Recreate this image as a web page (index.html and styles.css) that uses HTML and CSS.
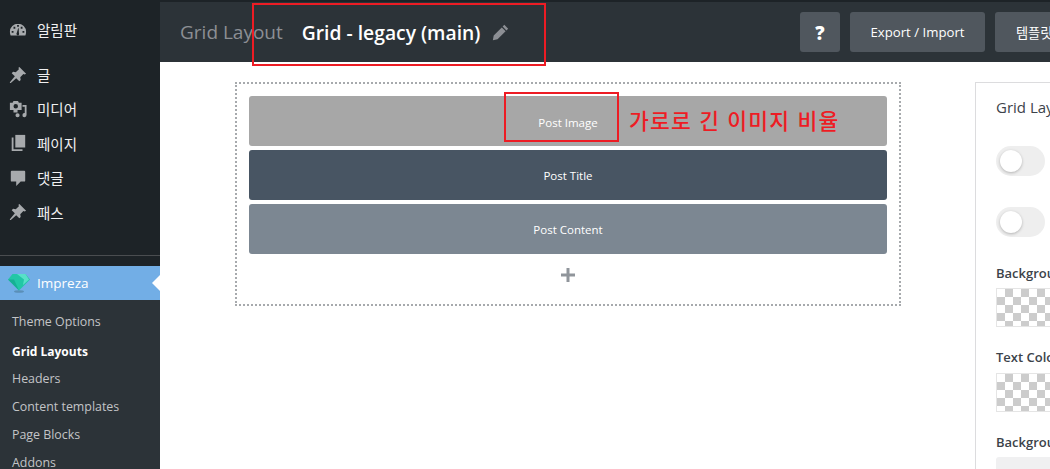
FILE: index.html
```html
<!DOCTYPE html>
<html lang="ko">
<head>
  <meta charset="UTF-8">
  <title>Grid Layout</title>
  <link rel="stylesheet" href="styles.css">
</head>
<body>
  <div class="admin">
    <nav class="sidebar">
      <ul class="menu">
        <li class="menu-item menu-first">
          <svg class="menu-icon" viewBox="0 0 20 20">
            <path fill-rule="evenodd" d="M10 3a9 9 0 0 0-9 9c0 1.600.3 3 .8 4h16.400c.5-1 .8-2.400.8-4a9 9 0 0 0-9-9zM3 11h2v2H3zm2-4.500h2v2H5zM9 4.500h2v2H9zm4 2h2v2h-2zm2 4.500h2v2h-2zM11.200 14a1.500 1.500 0 1 1-2.600-.6L10.200 8l.6 0 .2 5z"/>
          </svg>
          <span>알림판</span>
        </li>
        <li class="menu-item menu-gap">
          <svg class="menu-icon" viewBox="0 0 20 20"><path d="M11.500 1l7.500 7.500-1.600 1-1.400-.5-3.500 3.500.5 3-1.500 1.500-3.500-3.500L2 19l-1 0 0-1 5.500-6.500L3 8l1.500-1.500 3 .5L11 3.500 10.500 2z"/></svg>
          <span>글</span>
        </li>
        <li class="menu-item">
          <svg class="menu-icon" viewBox="0 0 20 20">
            <path fill-rule="evenodd" d="M1 3h3l1-2h5l1 2h3v8H9.500v3H5v-3H1zm6.500 1.500a2.500 2.500 0 1 0 0 5 2.500 2.500 0 0 0 0-5z"/>
            <path d="M15 5.500h4.500v11.300a2.300 2.300 0 1 1-2-2.300V7.500H15zM9.500 14.700a2.300 2.300 0 1 1 0 4.600 2.300 2.300 0 0 1 0-4.600z"/>
          </svg>
          <span>미디어</span>
        </li>
        <li class="menu-item">
          <svg class="menu-icon" viewBox="0 0 20 20"><path d="M7 1h11v14H7z"/><path d="M5 4v13h10v2H3V4z"/></svg>
          <span>페이지</span>
        </li>
        <li class="menu-item">
          <svg class="menu-icon" viewBox="0 0 20 20"><path d="M3 2h14a1 1 0 0 1 1 1v10a1 1 0 0 1-1 1h-4l-5 5v-5H3a1 1 0 0 1-1-1V3a1 1 0 0 1 1-1z"/></svg>
          <span>댓글</span>
        </li>
        <li class="menu-item">
          <svg class="menu-icon" viewBox="0 0 20 20"><path d="M11.500 1l7.500 7.500-1.600 1-1.400-.5-3.500 3.500.5 3-1.500 1.500-3.500-3.500L2 19l-1 0 0-1 5.500-6.500L3 8l1.500-1.500 3 .5L11 3.500 10.500 2z"/></svg>
          <span>패스</span>
        </li>
      </ul>
      <div class="menu-separator"></div>
      <div class="menu-current">
        <svg class="gem" viewBox="0 0 22 20">
          <ellipse cx="11" cy="18.500" rx="5" ry="1.300" fill="#5a8fb8"/>
          <path d="M4.500 1h13L22 6.500 11 17.500 0 6.500z" fill="#22c7a6"/>
          <path d="M9 1h8.500L21 6.500l-6 5.500 1-5.500z" fill="#58e0c8"/>
          <path d="M0 6.500h6L11 17.500z" fill="#17b094"/>
        </svg>
        <span>Impreza</span>
      </div>
      <ul class="submenu">
        <li>Theme Options</li>
        <li class="submenu-active">Grid Layouts</li>
        <li>Headers</li>
        <li>Content templates</li>
        <li>Page Blocks</li>
        <li>Addons</li>
      </ul>
    </nav>

    <div class="main">
      <header class="topbar">
        <span class="topbar-label">Grid Layout</span>
        <span class="topbar-title">Grid - legacy (main)</span>
        <svg class="pencil" viewBox="0 0 20 20"><path d="M14.500 1l4.500 4.500-2 2L12.500 3zM11.500 4l4.500 4.500-9.500 9.500L1 19l1-5.500z"/></svg>
        <div class="topbar-actions">
          <button class="btn btn-help">?</button>
          <button class="btn btn-export">Export / Import</button>
          <button class="btn btn-template">템플릿 선택</button>
        </div>
      </header>

      <div class="content">
        <section class="canvas">
          <div class="block block-image">Post Image</div>
          <div class="block block-title">Post Title</div>
          <div class="block block-content">Post Content</div>
          <div class="add-block">
            <svg class="plus" viewBox="0 0 14 14"><path d="M5.500 0h3v5.500H14v3H8.500V14h-3V8.500H0v-3h5.500z"/></svg>
          </div>
        </section>

        <aside class="panel">
          <div class="panel-title">Grid Layout Settings</div>
          <div class="toggle"><span class="knob"></span></div>
          <div class="toggle toggle-second"><span class="knob"></span></div>
          <label class="field-label label-bg">Background Color</label>
          <div class="swatch"></div>
          <label class="field-label label-text">Text Color</label>
          <div class="swatch"></div>
          <label class="field-label label-bg2">Background Image</label>
          <div class="input-box"></div>
        </aside>
      </div>
    </div>
  </div>

  <!-- red notes drawn over the screenshot -->
  <div class="note note-title"></div>
  <div class="note note-image"></div>
  <div class="note-text">가로로 긴 이미지 비율</div>
</body>
</html>
```

FILE: styles.css
```css
html, body {
  margin: 0;
  height: 469px;
  overflow: hidden;
}

body {
  position: relative;
  font-family: "Open Sans", "Noto Sans CJK KR", sans-serif;
  background-color: #fff;
  color: #3c434a;
}

ul {
  list-style: none;
  margin: 0;
  padding: 0;
}

.admin {
  display: flex;
  width: 1050px;
  height: 469px;
  overflow: hidden;
}

.sidebar {
  flex: 0 0 160px;
  background-color: #1d2327;
  color: #f0f0f1;
  font-size: 14px;
}

.menu {
  padding-top: 12.500px;
}

.menu-item {
  display: flex;
  align-items: center;
  height: 34.400px;
  padding-left: 9px;
  font-family: "Noto Sans CJK KR", sans-serif;
  font-size: 14.500px;
}

.menu-gap {
  margin-top: 10.500px;
}

.menu-icon {
  width: 18px;
  height: 18px;
  margin-right: 10px;
  fill: #a7aaad;
  flex: none;
}

.menu-separator {
  height: 1px;
  margin-top: 25.500px;
  background-color: #4a4d50;
}

.menu-current {
  display: flex;
  align-items: center;
  height: 34px;
  margin-top: 10px;
  padding-left: 8px;
  background-color: #72aee6;
  color: #fff;
  font-size: 13.500px;
  position: relative;
}

.menu-current::after {
  content: "";
  position: absolute;
  right: 0;
  top: 9px;
  border: 8px solid transparent;
  border-right-color: #fff;
  border-left-width: 0;
}

.gem {
  width: 22px;
  height: 20px;
  margin-right: 7px;
}

.submenu {
  background-color: #2c3338;
  padding-top: 8.500px;
  height: 162px;
  font-size: 12.400px;
  color: #c3c4c7;
}

.submenu li {
  height: 28.200px;
  line-height: 28px;
  padding-left: 12px;
}

.submenu .submenu-active {
  color: #fff;
  font-size: 12px;
  font-weight: 700;
  line-height: 30px;
}

.main {
  flex: 1;
  min-width: 0;
  display: flex;
  flex-direction: column;
}

.topbar {
  display: flex;
  align-items: center;
  flex: none;
  height: 60px;
  border-top: 2px solid #1d2327;
  padding-left: 20px;
  background-color: #2c3338;
}

.topbar-label {
  font-size: 19px;
  color: #8c8f94;
  margin-right: 19px;
}

.topbar-title {
  font-size: 19.300px;
  font-weight: 600;
  color: #fff;
  margin-right: 12px;
}

.pencil {
  width: 17px;
  height: 17px;
  fill: #8c8f94;
}

.topbar-actions {
  display: flex;
  gap: 10px;
  margin-left: auto;
  flex: none;
  width: 250px;
}

.btn {
  flex: none;
  height: 40px;
  border: none;
  border-radius: 3px;
  background-color: #50575e;
  color: #fff;
  font-family: "Open Sans", "Noto Sans CJK KR", sans-serif;
  font-size: 13.200px;
  white-space: nowrap;
}

.btn-help {
  width: 40px;
  font-size: 18.500px;
  font-weight: 800;
}

.btn-export {
  width: 135px;
}

.btn-template {
  width: 106px;
}

.content {
  display: flex;
  align-items: flex-start;
  flex: 1;
  padding: 20px 0 0 75px;
}

.canvas {
  flex: none;
  box-sizing: border-box;
  width: 666px;
  height: 224px;
  padding: 12px;
  border: 2px dotted #a7aaad;
  display: flex;
  flex-direction: column;
  gap: 4px;
}

.block {
  height: 50px;
  border-radius: 3px;
  display: flex;
  align-items: center;
  justify-content: center;
  color: #fff;
  font-size: 11.500px;
}

.block-image {
  background-color: #a7a7a7;
  padding-top: 2px;
  box-sizing: border-box;
}

.block-title {
  background-color: #485563;
}

.block-content {
  background-color: #7c8792;
}

.add-block {
  display: flex;
  justify-content: center;
  padding-top: 10px;
}

.plus {
  width: 14px;
  height: 14px;
  fill: #90959b;
}

.panel {
  flex: none;
  box-sizing: border-box;
  width: 300px;
  height: 420px;
  margin-left: 74px;
  padding: 14px 20px;
  border: 1px solid #dcdcde;
  font-size: 13px;
}

.panel-title {
  font-size: 15px;
  line-height: 20px;
  white-space: nowrap;
}

.toggle {
  position: relative;
  width: 49px;
  height: 30px;
  margin-top: 29px;
  border-radius: 15px;
  background-color: #eee;
}

.toggle-second {
  margin-top: 31px;
}

.knob {
  position: absolute;
  left: 4px;
  top: 4px;
  width: 22px;
  height: 22px;
  border-radius: 50%;
  background-color: #fff;
  box-shadow: 0 1px 3px rgba(0,0,0,0.25);
}

.field-label {
  display: block;
  font-weight: 600;
  line-height: 18px;
  white-space: nowrap;
}

.label-bg {
  margin-top: 27px;
}

.label-text {
  margin-top: 21px;
  margin-bottom: 7px;
}

.label-bg2 {
  margin-top: 21px;
}

.swatch {
  width: 210px;
  height: 39px;
  margin-top: 6px;
  border: 1px solid #e5e5e5;
  box-sizing: border-box;
  background-color: #fff;
  background-image: conic-gradient(#ccc 25%, #fff 0 50%, #ccc 0 75%, #fff 0);
  background-size: 16px 16px;
}

.input-box {
  width: 210px;
  height: 30px;
  margin-top: 6px;
  border-radius: 3px;
  background-color: #f0f0f1;
}

.note {
  position: absolute;
  box-sizing: border-box;
  border: 2px solid #ed1c24;
}

.note-title {
  left: 252px;
  top: 3px;
  width: 294px;
  height: 63px;
}

.note-image {
  left: 504px;
  top: 92px;
  width: 115px;
  height: 50px;
}

.note-text {
  position: absolute;
  left: 629px;
  top: 104px;
  font-family: "Noto Sans CJK KR", sans-serif;
  font-size: 21.500px;
  font-weight: 500;
  line-height: 32px;
  letter-spacing: 1.200px;
  color: #ed1c24;
  white-space: nowrap;
}
```
